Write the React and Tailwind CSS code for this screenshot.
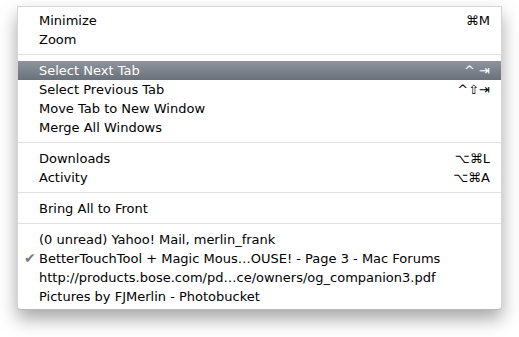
import React from 'react';

const groups = [
  [
    { label: 'Minimize', keys: '⌘M' },
    { label: 'Zoom' },
  ],
  [
    { label: 'Select Next Tab', keys: '^ ⇥', active: true },
    { label: 'Select Previous Tab', keys: '^⇧⇥' },
    { label: 'Move Tab to New Window' },
    { label: 'Merge All Windows' },
  ],
  [
    { label: 'Downloads', keys: '⌥⌘L' },
    { label: 'Activity', keys: '⌥⌘A' },
  ],
  [{ label: 'Bring All to Front' }],
  [
    { label: '(0 unread) Yahoo! Mail, merlin_frank' },
    { label: 'BetterTouchTool + Magic Mous…OUSE! - Page 3 - Mac Forums', checked: true },
    { label: 'http://products.bose.com/pd…ce/owners/og_companion3.pdf' },
    { label: 'Pictures by FJMerlin - Photobucket' },
  ],
];

function Item({ label, keys, active, checked }) {
  return (
    <div
      className={
        'relative flex h-[19px] items-center justify-between pl-[21px] pr-[11px] ' +
        (active ? 'bg-gradient-to-b from-[#8f959e] to-[#6b717a] text-white' : 'text-black')
      }
    >
      {checked && (
        <span className="absolute left-[6px] top-0 text-[14px] leading-[19px] text-[#7a7a7a]">✔</span>
      )}
      <span className="whitespace-nowrap">{label}</span>
      {keys && <span className="whitespace-pre text-[13px]">{keys}</span>}
    </div>
  );
}

export default function App() {
  return (
    <div className="h-[337px] w-[519px] bg-white pl-[17px] pt-[6px]">
      <div
        className="w-[485px] rounded-b-[4px] border border-[#d4d4d4] border-b-[#b8b8b8] bg-white pb-[3px] pt-[4px] text-[13px] shadow-[0_9px_18px_rgba(0,0,0,0.35)]"
        style={{ fontFamily: '"DejaVu Sans", sans-serif' }}
      >
        {groups.map((g, gi) => (
          <div key={gi}>
            {gi > 0 && (
              <div className="pb-[6px] pt-[5px]">
                <div className="h-px bg-[#e0e0e0]" />
              </div>
            )}
            {g.map((it) => (
              <Item key={it.label} {...it} />
            ))}
          </div>
        ))}
      </div>
    </div>
  );
}
